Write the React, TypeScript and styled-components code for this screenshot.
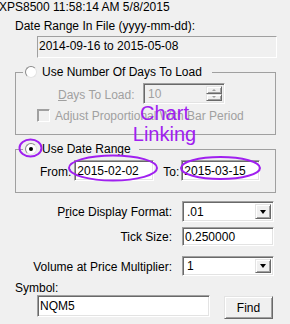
import styled, { createGlobalStyle, css } from 'styled-components';

const GlobalStyle = createGlobalStyle`
  html, body {
    margin: 0;
    padding: 0;
    background: #f0f0f0;
  }
  body {
    font-family: "Liberation Sans", Arial, sans-serif;
    font-size: 12px;
    color: #000;
  }
  #root {
    width: 290px;
    height: 324px;
    overflow: hidden;
  }
`;

const sunken = css`
  box-sizing: border-box;
  border: 1px solid;
  border-color: #a0a0a0 #ffffff #ffffff #a0a0a0;
  box-shadow: inset 1px 1px 0 #696969, inset -1px -1px 0 #e3e3e3;
`;

const raised = css`
  box-sizing: border-box;
  border: 1px solid;
  border-color: #e3e3e3 #696969 #696969 #e3e3e3;
  box-shadow: inset 1px 1px 0 #ffffff, inset -1px -1px 0 #a0a0a0;
  background: #f0f0f0;
`;

const Page = styled.div`
  position: relative;
  width: 290px;
  height: 324px;
`;

const StatusLine = styled.div`
  height: 15px;
  line-height: 15px;
  margin-left: -1px;
  white-space: nowrap;
`;

const InfoLabel = styled.div`
  margin-top: 4px;
  padding-left: 15px;
  line-height: 15px;
`;

const ReadBox = styled.div`
  box-sizing: border-box;
  margin: 2px 0 0 37px;
  width: 240px;
  height: 22px;
  line-height: 19px;
  padding-left: 1px;
  border: 1px solid;
  border-color: #a0a0a0 #ffffff #ffffff #a0a0a0;
`;

const Group = styled.fieldset<{ $pb: number }>`
  box-sizing: border-box;
  margin: 7px 0 0 15px;
  padding: 0 0 ${p => p.$pb}px 0;
  width: 261px;
  min-width: 0;
  border: 1px solid #a0a0a0;
`;

const Legend = styled.legend<{ $pr: number }>`
  margin-left: 7px;
  padding: 0 ${p => p.$pr}px 0 2px;
  height: 14px;
  line-height: 14px;
  display: flex;
  align-items: center;
  gap: 5px;
`;

const Radio = styled.span<{ $checked?: boolean }>`
  box-sizing: border-box;
  width: 12px;
  height: 12px;
  border-radius: 50%;
  background: #fff;
  border: 1px solid;
  border-color: #8a8a8a #e3e3e3 #e3e3e3 #8a8a8a;
  display: flex;
  align-items: center;
  justify-content: center;
  &::after {
    content: '';
    width: 4px;
    height: 4px;
    border-radius: 50%;
    background: ${p => (p.$checked ? '#000' : 'transparent')};
  }
`;

const SpinRow = styled.div`
  display: flex;
  align-items: flex-start;
  margin: 4px 0 0 42px;
`;

const DisabledLabel = styled.span<{ $w?: number }>`
  color: #a0a0a0;
  line-height: 14px;
  margin-top: 5px;
  ${p => p.$w && `width: ${p.$w}px;`}
  u {
    text-decoration: underline;
  }
`;

const Spinner = styled.div`
  ${sunken};
  width: 82px;
  height: 21px;
  padding: 2px;
  display: flex;
  background: #f0f0f0;
`;

const SpinValue = styled.span`
  flex: 1;
  color: #a0a0a0;
  line-height: 17px;
  padding-left: 2px;
`;

const SpinButtons = styled.div`
  width: 16px;
  display: flex;
  flex-direction: column;
`;

const SpinButton = styled.span<{ $up?: boolean }>`
  ${raised};
  flex: 1;
  display: flex;
  align-items: center;
  justify-content: center;
  &::after {
    content: '';
    border-left: 2px solid transparent;
    border-right: 2px solid transparent;
    ${p =>
      p.$up
        ? 'border-bottom: 2px solid #a0a0a0;'
        : 'border-top: 2px solid #a0a0a0;'}
  }
`;

const CheckRow = styled.div`
  display: flex;
  align-items: flex-start;
  gap: 5px;
  margin: 5px 0 0 21px;
`;

const CheckBox = styled.span`
  ${sunken};
  width: 13px;
  height: 13px;
  background: #f0f0f0;
  box-shadow: inset 1px 1px 0 #a0a0a0;
`;

const CheckLabel = styled.span`
  color: #a0a0a0;
  line-height: 15px;
  margin-top: 0;
  white-space: nowrap;
`;

const DateRow = styled.div`
  display: flex;
  align-items: center;
  margin: 4px 0 0 24px;
`;

const FieldLabel = styled.span<{ $ml?: number }>`
  margin-left: ${p => p.$ml ?? 0}px;
  padding-top: 2px;
`;

const TextBox = styled.div<{ $w: number; $h?: number; $ml?: number }>`
  ${sunken};
  width: ${p => p.$w}px;
  height: ${p => p.$h ?? 21}px;
  margin-left: ${p => p.$ml ?? 0}px;
  background: #fff;
  padding-left: 2px;
  display: flex;
  align-items: center;
  white-space: nowrap;
`;

const FormRow = styled.div<{ $mt: number; $h: number }>`
  display: grid;
  grid-template-columns: 172px 92px;
  column-gap: 10px;
  align-items: center;
  margin-top: ${p => p.$mt}px;
  height: ${p => p.$h}px;
`;

const RowLabel = styled.span`
  text-align: right;
  white-space: nowrap;
  padding-top: 1px;
  u {
    text-decoration: underline;
  }
`;

const Dropdown = styled.div<{ $h: number }>`
  ${sunken};
  width: 92px;
  height: ${p => p.$h}px;
  background: #fff;
  padding: 2px;
  display: flex;
`;

const DropValue = styled.span`
  flex: 1;
  padding-left: 2px;
  display: flex;
  align-items: center;
`;

const DropButton = styled.span`
  ${raised};
  width: 16px;
  display: flex;
  align-items: center;
  justify-content: center;
  &::after {
    content: '';
    border-left: 3.5px solid transparent;
    border-right: 3.5px solid transparent;
    border-top: 4px solid #000;
  }
`;

const SymbolLabel = styled.div`
  margin-top: 6px;
  padding-left: 15px;
  line-height: 13px;
`;

const SymbolRow = styled.div`
  display: flex;
  align-items: flex-start;
  margin-left: 37px;
`;

const FindButton = styled.button`
  ${raised};
  width: 49px;
  height: 23px;
  margin: 1px 0 0 14px;
  padding: 0;
  font-family: inherit;
  font-size: 12px;
  color: #000;
`;

const Annotation = styled.svg`
  position: absolute;
  left: 0;
  top: 0;
  pointer-events: none;
`;

const NoteText = styled.div`
  position: absolute;
  left: 114px;
  top: 103px;
  width: 101px;
  text-align: center;
  font-size: 20px;
  line-height: 21px;
  color: #a020f0;
  pointer-events: none;
`;

export default function App() {
  return (
    <>
      <GlobalStyle />
      <Page>
        <StatusLine>XPS8500 11:58:14 AM 5/8/2015</StatusLine>
        <InfoLabel>Date Range In File (yyyy-mm-dd):</InfoLabel>
        <ReadBox>2014-09-16 to 2015-05-08</ReadBox>

        <Group $pb={10}>
          <Legend $pr={10}>
            <Radio />
            Use Number Of Days To Load
          </Legend>
          <SpinRow>
            <DisabledLabel $w={85}>
              <u>D</u>ays To Load:
            </DisabledLabel>
            <Spinner>
              <SpinValue>10</SpinValue>
              <SpinButtons>
                <SpinButton $up />
                <SpinButton />
              </SpinButtons>
            </Spinner>
          </SpinRow>
          <CheckRow>
            <CheckBox />
            <CheckLabel>Adjust Proportional With Bar Period</CheckLabel>
          </CheckRow>
        </Group>

        <Group $pb={11}>
          <Legend $pr={8}>
            <Radio $checked />
            Use Date Range
          </Legend>
          <DateRow>
            <FieldLabel>From:</FieldLabel>
            <TextBox $w={80} $ml={3}>2015-02-02</TextBox>
            <FieldLabel $ml={9}>To:</FieldLabel>
            <TextBox $w={79} $ml={2}>2015-03-15</TextBox>
          </DateRow>
        </Group>

        <FormRow $mt={8} $h={21}>
          <RowLabel>
            P<u>r</u>ice Display Format:
          </RowLabel>
          <Dropdown $h={21}>
            <DropValue>.01</DropValue>
            <DropButton />
          </Dropdown>
        </FormRow>
        <FormRow $mt={5} $h={19}>
          <RowLabel>Tick Size:</RowLabel>
          <TextBox $w={92} $h={19}>0.250000</TextBox>
        </FormRow>
        <FormRow $mt={10} $h={20}>
          <RowLabel>Volume at Price Multiplier:</RowLabel>
          <Dropdown $h={20}>
            <DropValue>1</DropValue>
            <DropButton />
          </Dropdown>
        </FormRow>

        <SymbolLabel>Symbol:</SymbolLabel>
        <SymbolRow>
          <TextBox $w={173} $h={22}>NQM5</TextBox>
          <FindButton>Find</FindButton>
        </SymbolRow>

        <Annotation width={290} height={324}>
          <g fill="none" stroke="#a020f0" strokeWidth={2}>
            <ellipse cx={30.5} cy={148} rx={11} ry={8.5} />
            <ellipse cx={113} cy={168} rx={44} ry={12.5} />
            <ellipse cx={220.5} cy={168} rx={39.5} ry={11} />
          </g>
        </Annotation>
        <NoteText>
          Chart
          <br />
          Linking
        </NoteText>
      </Page>
    </>
  );
}
